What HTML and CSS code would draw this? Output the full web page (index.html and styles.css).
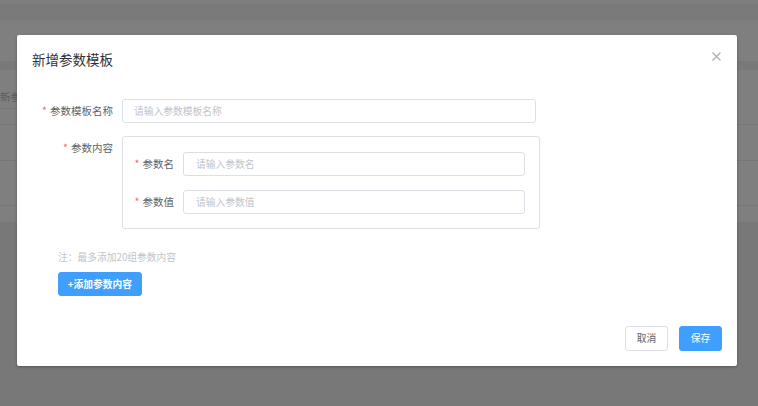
FILE: index.html
```html
<!DOCTYPE html>
<html lang="zh-CN">
<head>
<meta charset="utf-8">
<title>新增参数模板</title>
<link rel="stylesheet" href="styles.css">
</head>
<body>
<div class="page">
  <div class="top-white"></div>
  <div class="tabs"></div>
  <div class="content">
    <div class="spacer"></div>
    <div class="band"></div>
    <div class="toolbar"><div class="search"><span class="search-text">新参数</span></div></div>
    <div class="row r1"></div>
    <div class="row r2"></div>
    <div class="row r3"></div>
    <div class="row r4"></div>
  </div>
</div>

<div class="overlay"></div>

<div class="dialog">
  <div class="dialog-header">
    <span class="dialog-title">新增参数模板</span>
    <button class="dialog-close" aria-label="关闭">
      <svg width="9" height="9" viewBox="0 0 9 9"><path d="M0.5 0.5 L8.5 8.5 M8.5 0.5 L0.5 8.5" stroke="#a8abb2" stroke-width="1.1" fill="none"/></svg>
    </button>
  </div>
  <div class="dialog-body">
    <div class="form-item">
      <label class="form-label"><span class="star">*</span>参数模板名称</label>
      <div class="form-control"><input class="input w-main" placeholder="请输入参数模板名称"></div>
    </div>
    <div class="form-item">
      <label class="form-label"><span class="star">*</span>参数内容</label>
      <div class="form-control">
        <div class="param-box">
          <div class="inner-item">
            <label class="inner-label"><span class="star">*</span>参数名</label>
            <input class="input w-inner" placeholder="请输入参数名">
          </div>
          <div class="inner-item">
            <label class="inner-label"><span class="star">*</span>参数值</label>
            <input class="input w-inner" placeholder="请输入参数值">
          </div>
        </div>
      </div>
    </div>
    <div class="note">注：最多添加20组参数内容</div>
    <button class="btn btn-primary btn-add">+添加参数内容</button>
  </div>
  <div class="dialog-footer">
    <button class="btn btn-default btn-foot">取消</button>
    <button class="btn btn-primary btn-foot">保存</button>
  </div>
</div>
</body>
</html>
```

FILE: styles.css
```css
* { box-sizing: border-box; }
html, body { margin: 0; padding: 0; }
body {
  width: 758px;
  height: 406px;
  overflow: hidden;
  background: #f0f0f0;
  font-family: "Noto Sans CJK SC", "Noto Sans", "Liberation Sans", sans-serif;
  position: relative;
}

/* background page */
.top-white { height: 4px; background: #fff; }
.tabs { height: 16px; background: #f4f4f4; }
.content { background: #fff; }
.spacer { height: 41px; }
.band { height: 9px; background: #f3f3f3; }
.toolbar { height: 39px; }
.search {
  width: 120px;
  height: 39px;
  border-bottom: 1px solid #ececec;
  padding-top: 20px;
  line-height: 14px;
  font-size: 10.5px;
  color: #b8bbc2;
  overflow: hidden;
  white-space: nowrap;
}
.search-text { display: inline-block; }
.row { border-bottom: 1px solid #ececec; }
.r1 { height: 16px; }
.r2 { height: 36px; }
.r3 { height: 45px; }
.r4 { height: 16px; border-bottom: none; }

.overlay {
  position: absolute;
  inset: 0;
  background: rgba(0, 0, 0, 0.5);
}

/* dialog */
.dialog {
  position: absolute;
  left: 17px;
  top: 35px;
  width: 720px;
  background: #fff;
  border-radius: 2px;
  box-shadow: 0 1px 3px rgba(0, 0, 0, 0.3);
}
.dialog-header {
  padding: 15px 15px 7.5px;
  position: relative;
}
.dialog-title {
  font-size: 13.5px;
  line-height: 18px;
  color: #303133;
  display: block;
}
.dialog-close {
  position: absolute;
  top: 17px;
  right: 16px;
  width: 9px;
  height: 9px;
  padding: 0;
  border: none;
  background: none;
  display: flex;
}
.dialog-body {
  padding: 23px 15px 22.5px;
}
.form-item {
  display: flex;
  align-items: flex-start;
  margin-bottom: 13px;
}
.form-label {
  width: 90px;
  flex: none;
  padding-right: 9px;
  text-align: right;
  font-size: 10.5px;
  line-height: 24px;
  color: #606266;
  white-space: nowrap;
}
.star {
  color: #f56c6c;
  margin-right: 3px;
}
.input {
  height: 24px;
  border: 1px solid #dcdfe6;
  border-radius: 3px;
  font-family: inherit;
  font-size: 9.75px;
  color: #606266;
  background: #fff;
  outline: none;
  display: block;
}
.input::placeholder { color: #c0c4cc; }
.w-main { width: 414px; padding: 0 11px; }
.param-box {
  width: 418px;
  height: 93px;
  border: 1px solid #dcdfe6;
  border-radius: 3px;
  padding: 15px 14px 14px 10px;
}
.inner-item {
  display: flex;
  align-items: center;
  margin-bottom: 14px;
}
.inner-item:last-child { margin-bottom: 0; }
.inner-label {
  width: 50px;
  flex: none;
  padding-right: 9px;
  text-align: right;
  font-size: 10.5px;
  line-height: 24px;
  color: #606266;
  white-space: nowrap;
}
.w-inner { width: 342px; padding: 0 12px; }

.note {
  margin-top: 20px;
  margin-left: 26px;
  font-size: 9.75px;
  line-height: 16px;
  color: #c0c4cc;
}
.btn {
  font-family: inherit;
  font-size: 9.75px;
  border-radius: 3px;
  cursor: pointer;
  padding: 0;
  display: inline-flex;
  align-items: center;
  justify-content: center;
}
.btn-primary {
  background: #409eff;
  border: 1px solid #409eff;
  color: #fff;
}
.btn-default {
  background: #fff;
  border: 1px solid #dcdfe6;
  color: #606266;
}
.btn-add {
  margin-top: 7px;
  margin-left: 26px;
  width: 84px;
  height: 24px;
  font-weight: bold;
}
.dialog-footer {
  padding: 7.5px 15px 15px;
  display: flex;
  justify-content: flex-end;
  gap: 11px;
}
.btn-foot {
  width: 43px;
  height: 25px;
}
```
